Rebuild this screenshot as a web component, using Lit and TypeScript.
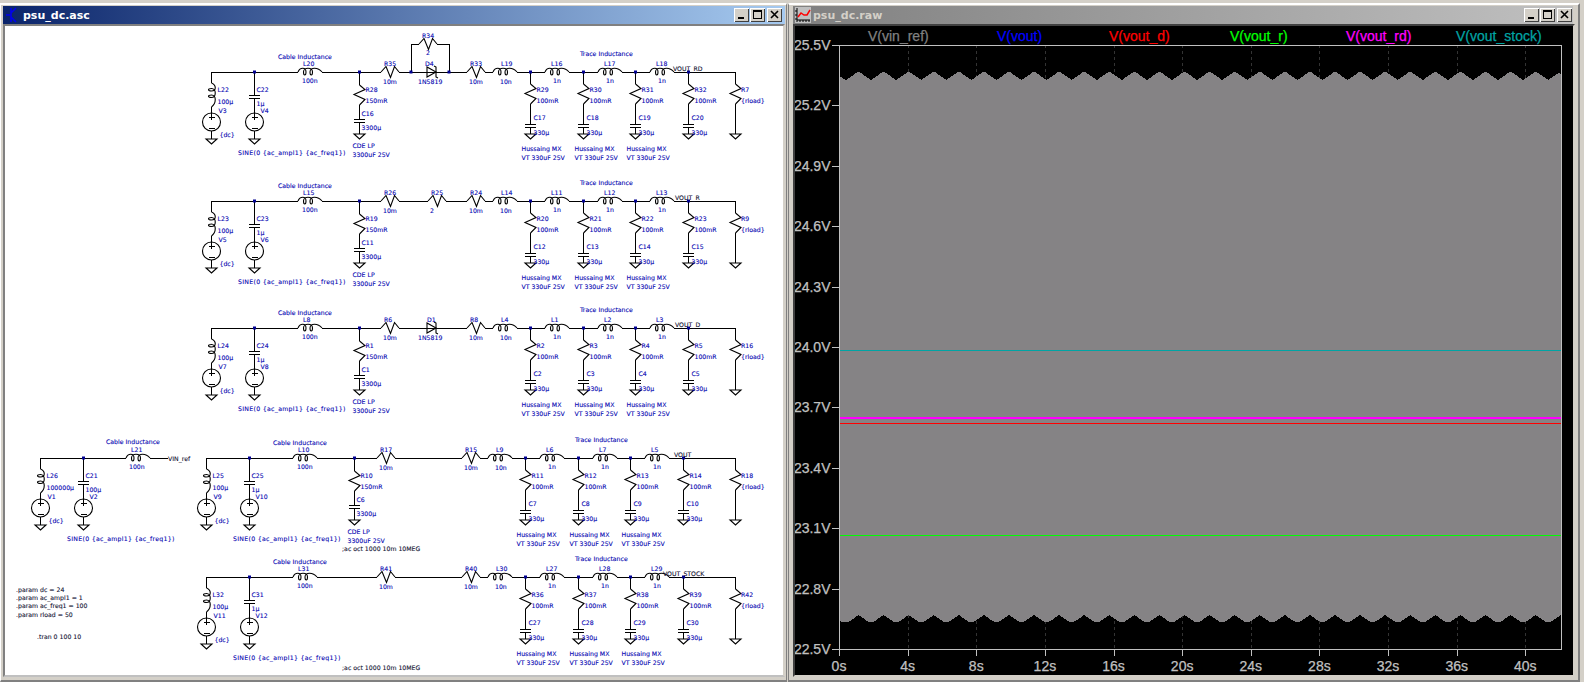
import { LitElement, html, svg, css } from "lit";
import { customElement } from "lit/decorators.js";

const W = (pts: number[][]) => pts.map((p) => p.join(",")).join(" ");

const wire = (x1: number, y1: number, x2: number, y2: number) =>
  svg`<line class="w" x1=${x1} y1=${y1} x2=${x2} y2=${y2}></line>`;
const dot = (x: number, y: number) => svg`<rect class="dot" x=${x - 1.5} y=${y - 1.5} width="3" height="3"></rect>`;
const txt = (x: number, y: number, s: string, cls = "t") => svg`<text class=${cls} x=${x} y=${y + 2.4}>${s}</text>`;

const COIL = "M0 0C2-5 8-5 8 0C8 4 5.500 4 5.500 0C5.500-5 14.500-5 14.500 0C14.500 4 12 4 12 0C12-5 20-5 24 0";
const coilH = (x: number, y: number) => svg`<path class="s" transform="translate(${x} ${y})" d=${COIL}></path>`;
const coilV = (x: number, y: number) => svg`<path class="s" transform="translate(${x} ${y}) rotate(90)" d=${COIL}></path>`;
const resH = (x: number, y: number) =>
  svg`<polyline class="s" points=${W([[x, y], [x + 5, y - 5.500], [x + 9.500, y + 5.500], [x + 13.500, y - 5.500], [x + 18, y]])}></polyline>`;
const resV = (x: number, y: number) =>
  svg`<polyline class="s" points=${W([[x, y], [x + 5.500, y + 4.500], [x - 5.500, y + 9.500], [x + 5.500, y + 14.500], [x, y + 20]])}></polyline>`;
const cap = (x: number, y: number) => svg`${wire(x - 5.500, y, x + 5.500, y)}${wire(x - 5.500, y + 3, x + 5.500, y + 3)}`;
const gnd = (x: number, y: number) =>
  svg`<polygon class="s" points=${W([[x - 5.500, y], [x + 5.500, y], [x, y + 5]])}></polygon>`;
const vsrc = (x: number, y: number) => svg`
  <circle class="s" cx=${x} cy=${y} r="9"></circle>
  ${wire(x, y - 9, x, y - 2)}${wire(x - 3, y - 5, x + 3, y - 5)}${wire(x - 3, y + 6, x + 3, y + 6)}`;
const diode = (x: number, y: number) => svg`
  <polygon class="s" points=${W([[x, y - 5], [x, y + 5], [x + 9, y]])}></polygon>
  <polyline class="s" points=${W([[x + 7, y - 6], [x + 9, y - 5], [x + 9, y + 5], [x + 11, y + 6]])}></polyline>`;

/** Left-hand input: inductor + source, capacitor + source, cable inductor. */
function input(y: number, dx: number, src: string[], c: string[], sinX: number) {
  const lx = 211.5 + dx, cx = 254.5 + dx;
  return svg`
    ${wire(lx, y, lx, y + 11)}${coilV(lx, y + 11)}${wire(lx, y + 35, lx, y + 41)}
    ${vsrc(lx, y + 50)}${wire(lx, y + 59, lx, y + 67)}${gnd(lx, y + 67)}
    ${wire(cx, y, cx, y + 23)}${cap(cx, y + 23)}${wire(cx, y + 26, cx, y + 41)}
    ${vsrc(cx, y + 50)}${wire(cx, y + 59, cx, y + 67)}${gnd(cx, y + 67)}
    ${dot(cx, y)}
    ${txt(lx + 6, y + 18, src[0])}${txt(lx + 6, y + 30, src[1])}${txt(lx + 7, y + 39, src[2])}
    ${txt(lx + 8, y + 63, "{dc}")}
    ${txt(cx + 2, y + 18, c[0])}${txt(cx + 2, y + 32, c[1])}${txt(cx + 6, y + 39, c[2])}
    ${txt(sinX, y + 81, "SINE(0 {ac_ampl1} {ac_freq1})", "t tw")}`;
}

const seriesLabel = (x: number, y: number, name: string, val: string) =>
  svg`${txt(x + 3, y - 8, name)}${txt(x + 2, y + 10, val)}`;

interface Item { k: "r" | "l" | "d" | "p"; x: number; n: string; v: string; }
interface Row {
  y: number; dx: number; src: string[]; c: string[]; cable: string;
  rc?: string[]; items: Item[]; net: string; netX: number;
  tl: string[]; tr: string[]; tc: string[]; load: string; acY?: number;
}

const rows: Row[] = [
  {
    y: 72, dx: 0, src: ["L22", "100μ", "V3"], c: ["C22", "1μ", "V4"], cable: "L20", rc: ["R28", "C16"],
    items: [
      { k: "r", x: 381, n: "R35", v: "10m" }, { k: "p", x: 411, n: "D4", v: "1N5819" },
      { k: "r", x: 467, n: "R33", v: "10m" }, { k: "l", x: 493, n: "L19", v: "10n" },
    ],
    net: "VOUT_RD", netX: 673, tl: ["L16", "L17", "L18"], tr: ["R29", "R30", "R31", "R32"], tc: ["C17", "C18", "C19", "C20"], load: "R7",
  },
  {
    y: 201, dx: 0, src: ["L23", "100μ", "V5"], c: ["C23", "1μ", "V6"], cable: "L15", rc: ["R19", "C11"],
    items: [
      { k: "r", x: 381, n: "R26", v: "10m" }, { k: "r", x: 428, n: "R25", v: "2" },
      { k: "r", x: 467, n: "R24", v: "10m" }, { k: "l", x: 493, n: "L14", v: "10n" },
    ],
    net: "VOUT_R", netX: 675, tl: ["L11", "L12", "L13"], tr: ["R20", "R21", "R22", "R23"], tc: ["C12", "C13", "C14", "C15"], load: "R9",
  },
  {
    y: 328, dx: 0, src: ["L24", "100μ", "V7"], c: ["C24", "1μ", "V8"], cable: "L8", rc: ["R1", "C1"],
    items: [
      { k: "r", x: 381, n: "R6", v: "10m" }, { k: "d", x: 427, n: "D1", v: "1N5819" },
      { k: "r", x: 467, n: "R8", v: "10m" }, { k: "l", x: 493, n: "L4", v: "10n" },
    ],
    net: "VOUT_D", netX: 675, tl: ["L1", "L2", "L3"], tr: ["R2", "R3", "R4", "R5"], tc: ["C2", "C3", "C4", "C5"], load: "R16",
  },
  {
    y: 458, dx: -5, src: ["L25", "100μ", "V9"], c: ["C25", "1μ", "V10"], cable: "L10", rc: ["R10", "C6"],
    items: [
      { k: "r", x: 377, n: "R17", v: "10m" }, { k: "r", x: 462, n: "R15", v: "10m" }, { k: "l", x: 488, n: "L9", v: "10n" },
    ],
    net: "VOUT", netX: 674, tl: ["L6", "L7", "L5"], tr: ["R11", "R12", "R13", "R14"], tc: ["C7", "C8", "C9", "C10"], load: "R18", acY: 549,
  },
  {
    y: 577, dx: -5, src: ["L32", "100μ", "V11"], c: ["C31", "1μ", "V12"], cable: "L31",
    items: [
      { k: "r", x: 377, n: "R41", v: "10m" }, { k: "r", x: 462, n: "R40", v: "10m" }, { k: "l", x: 488, n: "L30", v: "10n" },
    ],
    net: "VOUT_STOCK", netX: 663, tl: ["L27", "L28", "L29"], tr: ["R36", "R37", "R38", "R39"], tc: ["C27", "C28", "C29", "C30"], load: "R42", acY: 668,
  },
];

function itemSpan(i: Item): [number, number] {
  if (i.k === "r") return [i.x, i.x + 18];
  if (i.k === "l") return [i.x, i.x + 24];
  if (i.k === "d") return [i.x, i.x + 9];
  return [i.x, i.x];
}

function drawRow(r: Row) {
  const { y, dx } = r;
  const lx = 211.5 + dx;
  const cabX = 298 + dx;
  const juncs = dx ? [525.5, 578.5, 630.5, 683.5] : [530.5, 583.5, 635.5, 688.5];
  const stepL = dx ? [540, 593, 645] : [545, 598, 650];
  const jr = 359.5 + dx;

  // series chain in order, wire between consecutive spans
  const spans: [number, number][] = [[cabX, cabX + 24]];
  r.items.forEach((i) => {
    if (i.k === "p") spans.push([411, 449]);
    else spans.push(itemSpan(i));
  });
  stepL.forEach((x) => spans.push([x, x + 24]));
  const wires: unknown[] = [wire(lx, y, spans[0][0], y)];
  for (let i = 0; i < spans.length - 1; i++) wires.push(wire(spans[i][1], y, spans[i + 1][0], y));
  wires.push(wire(spans[spans.length - 1][1], y, 735.5, y));

  const items = r.items.map((i) => {
    if (i.k === "r") return svg`${resH(i.x, y)}${seriesLabel(i.x, y, i.n, i.v)}`;
    if (i.k === "l") return svg`${coilH(i.x, y)}${seriesLabel(i.x + 5, y, i.n, i.v)}`;
    if (i.k === "d")
      return svg`${wire(i.x, y, i.x + 9, y)}${diode(i.x, y)}${txt(i.x, y - 8, i.n)}${txt(i.x - 9, y + 10, i.v)}`;
    return svg`
      ${wire(411, y, 449, y)}${wire(411, y, 411, y - 28)}${wire(449, y, 449, y - 28)}
      ${wire(411, y - 28, 419, y - 28)}${wire(437, y - 28, 449, y - 28)}${resH(419, y - 28)}
      ${txt(422, y - 36, "R34")}${txt(426, y - 19, "2")}
      ${diode(427, y)}${dot(411, y)}${dot(449, y)}
      ${txt(425, y - 8, "D4")}${txt(418, y + 10, "1N5819")}`;
  });

  return svg`
    ${wires}
    ${input(y, dx, r.src, r.c, 238 + dx)}
    ${coilH(cabX, y)}
    ${txt(278 + dx, y - 15, "Cable Inductance")}
    ${txt(cabX + 5, y - 8, r.cable)}${txt(cabX + 4, y + 9, "100n")}
    ${r.rc
      ? svg`${wire(jr, y, jr, y + 13)}${resV(jr, y + 13)}${wire(jr, y + 33, jr, y + 47)}${cap(jr, y + 47)}${wire(jr, y + 50, jr, y + 62)}${gnd(jr, y + 62)}${dot(jr, y)}
        ${txt(jr + 6, y + 18, r.rc[0])}${txt(jr + 6, y + 29, "150mR")}${txt(jr + 2, y + 42, r.rc[1])}${txt(jr + 2, y + 56, "3300μ")}
        ${txt(jr - 7, y + 74, "CDE LP")}${txt(jr - 7, y + 83, "3300uF 25V")}`
      : ""}
    ${items}
    ${txt(580 + dx, y - 18, "Trace Inductance")}
    ${stepL.map((x, i) => svg`${coilH(x, y)}${txt(x + 6, y - 8, r.tl[i])}${txt(x + 8, y + 9, "1n")}`)}
    ${juncs.map((j, i) => svg`
      ${wire(j, y, j, y + 12)}${resV(j, y + 12)}${wire(j, y + 32, j, y + 52)}${cap(j, y + 52)}${wire(j, y + 55, j, y + 62)}${gnd(j, y + 62)}${dot(j, y)}
      ${txt(j + 6, y + 18, r.tr[i])}${txt(j + 6, y + 29, "100mR")}${txt(j + 3, y + 46, r.tc[i])}${txt(j + 3, y + 61, "330μ")}
      ${i < 3 ? svg`${txt(j - 9, y + 77, "Hussaing MX")}${txt(j - 9, y + 86, "VT 330uF 25V")}` : ""}`)}
    ${wire(735.5, y, 735.5, y + 12)}${resV(735.5, y + 12)}${wire(735.5, y + 32, 735.5, y + 62)}${gnd(735.5, y + 62)}
    ${txt(741, y + 18, r.load)}${txt(741, y + 29, "{rload}")}
    ${txt(r.netX, y - 3, r.net, "n")}
    ${r.acY ? txt(342, r.acY, ";ac oct 1000 10m 10MEG", "n") : ""}`;
}

function schematic() {
  const y = 458;
  return svg`
    ${rows.map(drawRow)}
    ${wire(40.5, y, 126, y)}${wire(150, y, 168, y)}
    ${input(y, -171, ["L26", "100000μ", "V1"], ["C21", "100μ", "V2"], 67)}
    ${coilH(126, y)}
    ${txt(106, y - 16, "Cable Inductance")}${txt(131, y - 8, "L21")}${txt(129, y + 9, "100n")}
    ${txt(168, y + 1, "VIN_ref", "n")}
    ${txt(16, 590, ".param dc = 24", "n")}${txt(16, 598, ".param ac_ampl1 = 1", "n")}
    ${txt(16, 606, ".param ac_freq1 = 100", "n")}${txt(16, 615, ".param rload = 50", "n")}
    ${txt(37, 637, ".tran 0 100 10", "n")}`;
}

const PL = 839, PT = 45, PR = 1561, PB = 649;
const YLAB = ["25.5V", "25.2V", "24.9V", "24.6V", "24.3V", "24.0V", "23.7V", "23.4V", "23.1V", "22.8V", "22.5V"];
const XLAB = ["0s", "4s", "8s", "12s", "16s", "20s", "24s", "28s", "32s", "36s", "40s"];
const P = 25.08;

function wave(): string {
  const top: number[][] = [[PL, 76]];
  for (let v = 846; v < PR; v += P) {
    [[0, 80], [8, 74.5], [11, 72.3], [14, 72.3], [17, 74.5]].forEach(([a, b]) => {
      if (v + a < PR) top.push([v + a, b]);
    });
  }
  top.push([PR, 74.5]);
  const bot: number[][] = [[PL, 619.5], [841, 621.8], [845, 622.3], [849, 621.8]];
  for (let v = 858.5; v < PR; v += P) {
    [[0, 615], [8, 620.5], [11, 622.3], [14, 622.3], [17, 620.5]].forEach(([a, b]) => {
      if (v + a < PR) bot.push([v + a, b]);
    });
  }
  bot.push([PR, 618]);
  return W(top.concat(bot.reverse()));
}

function plot() {
  const ys = YLAB.map((_, i) => PT + i * 60.4);
  const xs = XLAB.map((_, i) => PL + i * 68.63);
  const legend: [number, string, string][] = [
    [868, "V(vin_ref)", "#808080"], [997, "V(vout)", "#0000ff"], [1109, "V(vout_d)", "#ff0000"],
    [1230, "V(vout_r)", "#00ff00"], [1346, "V(vout_rd)", "#ff00ff"], [1456, "V(vout_stock)", "#00a4a4"],
  ];
  return svg`
    ${legend.map(([x, s, c]) => svg`<text class="p" x=${x} y="41" style="fill:${c};stroke:${c}">${s}</text>`)}
    ${xs.slice(1).map((x) => svg`<line class="g" x1=${Math.round(x) + 0.5} y1=${PT} x2=${Math.round(x) + 0.5} y2=${PB}></line>`)}
    <polygon class="tr" points=${wave()}></polygon>
    <line x1=${PL} x2=${PR} y1="350.5" y2="350.5" stroke="#00a4a4"></line>
    <line x1=${PL} x2=${PR} y1="418" y2="418" stroke="#ff00ff" stroke-width="2"></line>
    <line x1=${PL} x2=${PR} y1="423.5" y2="423.5" stroke="#ff0000"></line>
    <line x1=${PL} x2=${PR} y1="535.5" y2="535.5" stroke="#00ff00"></line>
    <rect class="fr" x=${PL + 0.5} y=${PT + 0.5} width=${PR - PL} height=${PB - PT}></rect>
    ${ys.map((y, i) => svg`
      <line class="fr" x1="832" x2=${PL} y1=${Math.round(y) + 0.5} y2=${Math.round(y) + 0.5}></line>
      <text class="p ax" x="830.5" y=${y + 5} text-anchor="end">${YLAB[i]}</text>`)}
    ${xs.map((x, i) => svg`
      <line class="fr" x1=${Math.round(x) + 0.5} x2=${Math.round(x) + 0.5} y1=${PB} y2="656"></line>
      <text class="p ax" x=${x} y="671" text-anchor="middle">${XLAB[i]}</text>`)}`;
}

const btns = html`
  <div class="btns">
    <span class="b"><svg width="13" height="12"><rect x="3" y="8" width="6" height="2" fill="#000"></rect></svg></span>
    <span class="b"><svg width="13" height="12"><rect x="2.500" y="1.500" width="8" height="8" fill="none" stroke="#000"></rect><rect x="2" y="1" width="9" height="2" fill="#000"></rect></svg></span>
    <span class="b close"><svg width="13" height="12"><path d="M3 2l7 7M10 2l-7 7" stroke="#000" stroke-width="1.600" fill="none"></path></svg></span>
  </div>`;

@customElement("app-root")
export class AppRoot extends LitElement {
  static styles = css`
    :host { display: block; width: 1584px; height: 682px; background: #d4d0c8; overflow: hidden; }
    .desk { display: flex; width: 1584px; height: 682px; gap: 1px; }
    .win { box-sizing: border-box; margin-top: 3px; height: 679px; display: flex; flex-direction: column;
      background: #d4d0c8; border-top: 2px solid #fff; border-bottom: 2px solid #808080; }
    .left { width: 787px; padding: 1px 1px 3px 2px; border-left: 1px solid #fff; border-right: 1px solid #808080; }
    .right { flex: 1; margin-right: 4px; padding: 1px 3px 3px 4px; border-left: 1px solid #808080; border-right: 2px solid #808080; }
    .title { height: 18px; flex: none; display: flex; align-items: center; gap: 2px; padding: 0 3px 0 2px;
      font: bold 11px "DejaVu Sans", sans-serif; }
    .active { background: linear-gradient(90deg, #0a246a, #a6caf0); color: #fff; }
    .inactive { background: linear-gradient(90deg, #808080, #c0c0c0); color: #d4d0c8; margin-right: 2px; padding-right: 1px; }
    .name { flex: 1; }
    .btns { display: flex; gap: 1px; }
    .b { box-sizing: border-box; width: 15px; height: 14px; background: #d4d0c8; display: flex; align-items: center; justify-content: center;
      box-shadow: inset 1px 1px 0 #fff, inset -1px -1px 0 #404040; }
    .close { margin-left: 1px; }
    .frame { flex: 1; min-height: 0; border: 2px solid; }
    .left .frame { border-color: #808080 #d4d0c8 #c0c0c0 #808080; }
    .right .frame { border-color: #404040 #d4d0c8 #d4d0c8 #404040; }
    .canvas { display: block; width: 100%; height: 100%; }
    .sch { background: #fff; }
    .plt { background: #000; }
    .w { stroke: #000; stroke-width: 1; shape-rendering: crispEdges; }
    .s { fill: none; stroke: #000; stroke-width: 1.1; }
    .dot { fill: #000090; }
    .t { font: 6.2px "DejaVu Sans", sans-serif; fill: #0000b0; stroke: #0000b0; stroke-width: 0.1; }
    .tw { letter-spacing: 0.3px; }
    .n { font: 6.2px "DejaVu Sans", sans-serif; fill: #101030; stroke: #101030; stroke-width: 0.1; }
    .p { font: 14px "Liberation Sans", sans-serif; stroke-width: 0.25; }
    .ax { fill: #c0c0c0; stroke: #c0c0c0; }
    .g { stroke: #333; stroke-dasharray: 3 3; shape-rendering: crispEdges; }
    .tr { fill: #858385; shape-rendering: crispEdges; }
    .fr { fill: none; stroke: #c0c0c0; shape-rendering: crispEdges; }
  `;

  render() {
    return html`
      <div class="desk">
        <section class="win left">
          <header class="title active">
            <svg width="16" height="16" viewBox="0 0 16 16">
              <path d="M6 1v14M1 8h5M6 6l5-5M6 10l5 5" stroke="#0000f0" stroke-width="1.600" fill="none"></path>
            </svg>
            <span class="name">psu_dc.asc</span>
            ${btns}
          </header>
          <div class="frame">
            <svg class="canvas sch" viewBox="5 26 778 649" preserveAspectRatio="xMinYMin slice">${schematic()}</svg>
          </div>
        </section>
        <section class="win right">
          <header class="title inactive">
            <svg width="16" height="16" viewBox="0 0 16 16">
              <rect width="16" height="16" fill="#c0c0c0"></rect>
              <path d="M2 1v12h13M2 13v2M5 13v2M8 13v2M11 13v2M14 13v2M0 4h2M0 8h2M0 12h2" stroke="#000" fill="none"></path>
              <path d="M3 10l3-4 3 2 3 0 3-5" stroke="#ff0000" stroke-width="1.500" fill="none"></path>
            </svg>
            <span class="name">psu_dc.raw</span>
            ${btns}
          </header>
          <div class="frame">
            <svg class="canvas plt" viewBox="795 26 778 649" preserveAspectRatio="xMinYMin slice">${plot()}</svg>
          </div>
        </section>
      </div>`;
  }
}
